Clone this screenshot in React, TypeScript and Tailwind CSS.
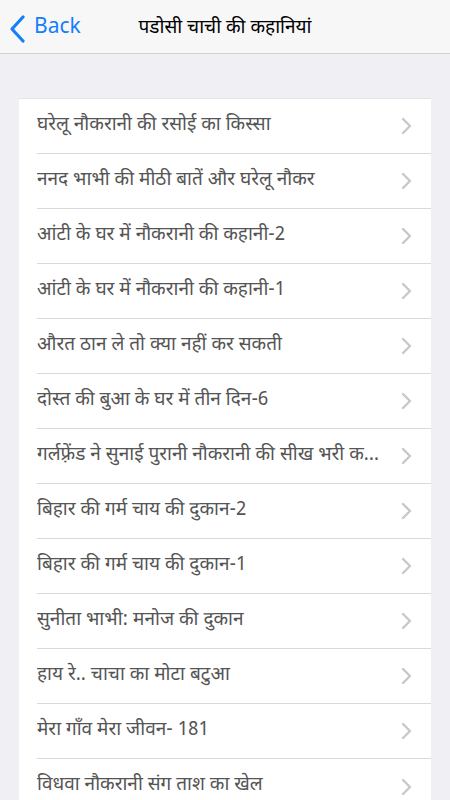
const stories: string[] = [
  "घरेलू नौकरानी की रसोई का किस्सा",
  "ननद भाभी की मीठी बातें और घरेलू नौकर",
  "आंटी के घर में नौकरानी की कहानी-2",
  "आंटी के घर में नौकरानी की कहानी-1",
  "औरत ठान ले तो क्या नहीं कर सकती",
  "दोस्त की बुआ के घर में तीन दिन-6",
  "गर्लफ़्रेंड ने सुनाई पुरानी नौकरानी की सीख भरी कहानी",
  "बिहार की गर्म चाय की दुकान-2",
  "बिहार की गर्म चाय की दुकान-1",
  "सुनीता भाभी: मनोज की दुकान",
  "हाय रे.. चाचा का मोटा बटुआ",
  "मेरा गाँव मेरा जीवन- 181",
  "विधवा नौकरानी संग ताश का खेल",
];

const font = {
  fontFamily: '"Noto Sans Devanagari", "Noto Sans", "Liberation Sans", sans-serif',
};

function BackChevron() {
  return (
    <svg width="17" height="28" viewBox="0 0 17 28" fill="none">
      <path d="M14 2 L3 14 L14 26" stroke="#157efb" strokeWidth="3.2" strokeLinecap="round" strokeLinejoin="round" />
    </svg>
  );
}

function RowChevron() {
  return (
    <svg width="11" height="18" viewBox="0 0 11 18" fill="none" className="shrink-0 ml-[14px]">
      <path d="M2 2 L9 9 L2 16" stroke="#c7c7cc" strokeWidth="2.4" strokeLinecap="round" strokeLinejoin="round" />
    </svg>
  );
}

export default function App() {
  return (
    <div className="w-[450px] h-[800px] overflow-hidden bg-[#efeff4]" style={font}>
      {/* Nav bar */}
      <div className="h-[54px] bg-[#f7f7f7] border-b border-[#d1d1d4] flex items-center relative pt-[5px]">
        <div className="flex items-center pl-[9px] text-[#157efb]">
          <BackChevron />
          <span className="text-[21px] ml-[8px]">Back</span>
        </div>
        <div className="absolute left-0 right-0 text-center text-[19px] font-normal text-black pointer-events-none">
          पडोसी चाची की कहानियां
        </div>
      </div>

      {/* List */}
      <div className="pt-[44px] px-[19px]">
        <div className="bg-white border-t border-[#e3e3e8]">
          {stories.map((title, i) => (
            <div key={i} className="pl-[18px]">
              <div
                className={`h-[55px] flex items-center pr-[19px] ${
                  i < stories.length - 1 ? "border-b border-[#d9d9dc]" : ""
                }`}
              >
                <span className="flex-1 min-w-0 truncate text-[19px] text-[#555555]">
                  {title}
                </span>
                <RowChevron />
              </div>
            </div>
          ))}
        </div>
      </div>
    </div>
  );
}
